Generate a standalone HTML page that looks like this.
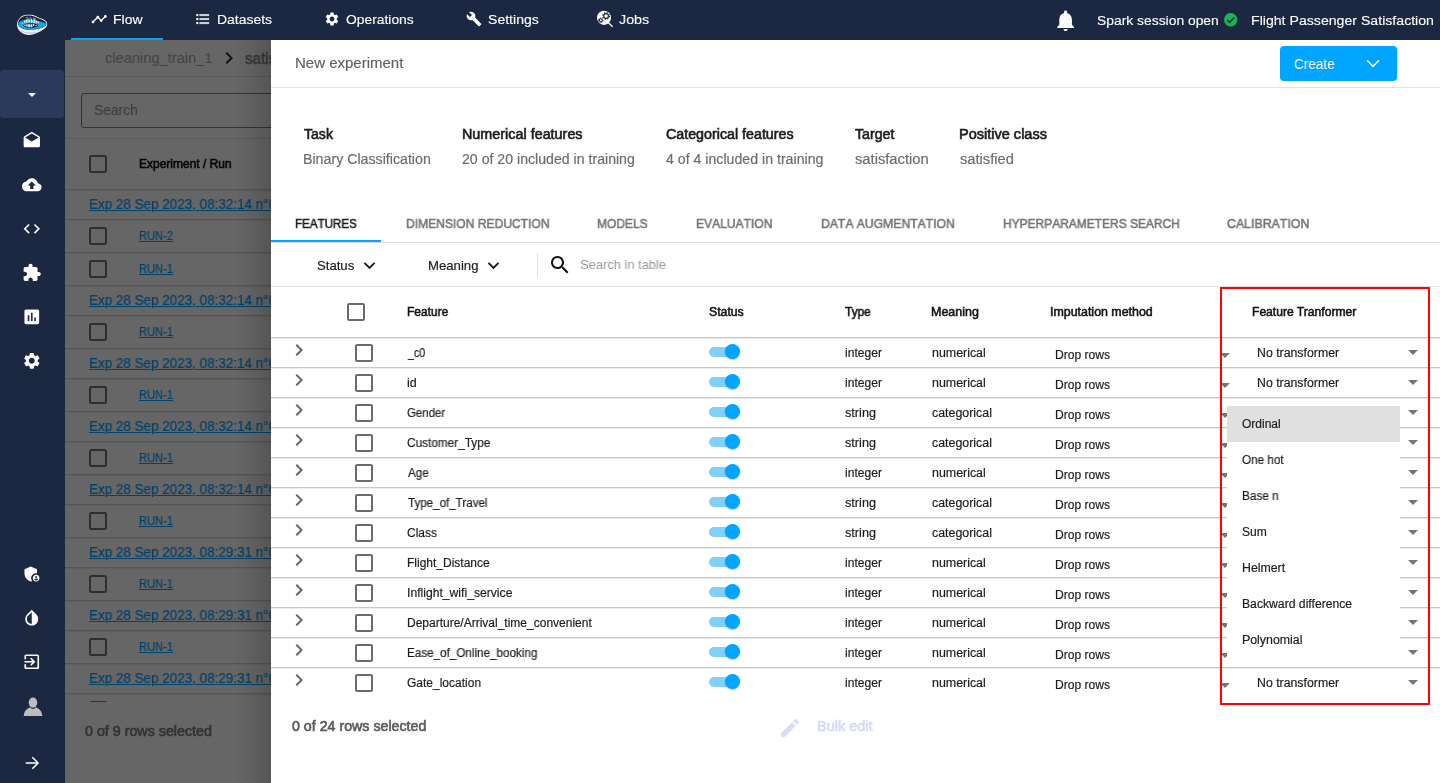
<!DOCTYPE html>
<html lang="en">
<head>
<meta charset="utf-8">
<title>New experiment</title>
<style>
html,body{margin:0;padding:0;}
body{width:1440px;height:783px;overflow:hidden;position:relative;background:#fff;font-family:"Liberation Sans",sans-serif;}
.a{position:absolute;}
.t{will-change:transform;position:absolute;white-space:nowrap;line-height:20px;height:20px;transform-origin:0 50%;font-family:"Liberation Sans",sans-serif;}
svg{position:absolute;overflow:visible;}
.cb{position:absolute;width:14px;height:14px;border:2px solid #6b6b6b;border-radius:2px;}
.cbd{position:absolute;width:14px;height:14px;border:2px solid #2e2e2e;border-radius:2.5px;}
.rl{position:absolute;left:271px;width:1169px;height:2px;background:linear-gradient(#c8c8c8 0,#c8c8c8 50%,#ececec 50%,#ececec 100%);}
.bl{position:absolute;left:65px;width:206px;height:2px;background:linear-gradient(#555 0,#555 50%,#5f5f5f 50%,#5f5f5f 100%);}
.trk{position:absolute;width:27px;height:10px;border-radius:5px;background:#7fd0fd;}
.thm{position:absolute;width:15.4px;height:15.4px;border-radius:50%;background:#00a5ff;box-shadow:0 1px 1.5px rgba(0,0,0,.25);}
</style>
</head>
<body>

<div class="a" id="bgpage" style="left:65px;top:40px;width:206px;height:743px;background:#666;"></div>
<div class="a" style="left:65px;top:76px;width:206px;height:1px;background:#5b5b5b;"></div>
<div class="a" style="left:65px;top:138px;width:206px;height:1px;background:#5b5b5b;"></div>
<div class="a" style="left:81px;top:93px;width:200px;height:33px;border:1px solid #333;border-radius:3px;"></div>
<svg style="left:217.4px;top:46.2px" width="24" height="24" viewBox="0 0 24 24"><path d="M10 6L8.59 7.41 13.17 12l-4.58 4.59L10 18l6-6z" fill="#111"/></svg>
<div class="cbd" style="left:89px;top:155px;"></div>
<div class="bl" style="top:189px;"></div>
<div class="bl" style="top:219px;"></div>
<div class="bl" style="top:252px;"></div>
<div class="bl" style="top:285px;"></div>
<div class="bl" style="top:315px;"></div>
<div class="bl" style="top:348px;"></div>
<div class="bl" style="top:378px;"></div>
<div class="bl" style="top:411px;"></div>
<div class="bl" style="top:441px;"></div>
<div class="bl" style="top:474px;"></div>
<div class="bl" style="top:504px;"></div>
<div class="bl" style="top:537px;"></div>
<div class="bl" style="top:567px;"></div>
<div class="bl" style="top:600px;"></div>
<div class="bl" style="top:630px;"></div>
<div class="bl" style="top:663px;"></div>
<div class="bl" style="top:693px;"></div>
<div class="cbd" style="left:89px;top:227px;"></div>
<div class="cbd" style="left:89px;top:260px;"></div>
<div class="cbd" style="left:89px;top:323px;"></div>
<div class="cbd" style="left:89px;top:386px;"></div>
<div class="cbd" style="left:89px;top:449px;"></div>
<div class="cbd" style="left:89px;top:512px;"></div>
<div class="cbd" style="left:89px;top:575px;"></div>
<div class="cbd" style="left:89px;top:638px;"></div>
<div class="a" style="left:89.5px;top:700.500px;width:17px;height:1.800px;border-radius:1px 1px 0 0;background:#343434;"></div>
<span class="t" style="left:104.89px;top:48.30px;font-size:15px;color:#424242;transform:scaleX(0.9766);">cleaning_train_1</span>
<span class="t" style="left:245.13px;top:48.80px;font-size:16px;color:#3b3b3b;-webkit-text-stroke:0.688px;transform:scaleX(0.9480);">satisfaction</span>
<span class="t" style="left:94.29px;top:100.00px;font-size:14.5px;color:#3a3a3a;transform:scaleX(0.9492);">Search</span>
<span class="t" style="left:139.40px;top:154.00px;font-size:12px;color:#000;-webkit-text-stroke:0.516px;transform:scaleX(0.9981);">Experiment / Run</span>
<span class="t" style="left:84.99px;top:721.00px;font-size:14px;color:#333;-webkit-text-stroke:0.602px;transform:scaleX(1.0193);">0 of 9 rows selected</span>
<span class="t bgl" style="left:88.84px;top:194.40px;font-size:14.5px;color:#00426a;transform:scaleX(0.9274);text-decoration:underline;text-decoration-thickness:1px;text-underline-offset:1px;-webkit-text-stroke:0.2px;">Exp 28 Sep 2023, 08:32:14 n°00</span>
<span class="t bgl" style="left:139.37px;top:225.50px;font-size:12px;color:#00426a;transform:scaleX(0.9281);text-decoration:underline;text-decoration-thickness:1px;text-underline-offset:1px;-webkit-text-stroke:0.2px;">RUN-2</span>
<span class="t bgl" style="left:139.37px;top:258.50px;font-size:12px;color:#00426a;transform:scaleX(0.9281);text-decoration:underline;text-decoration-thickness:1px;text-underline-offset:1px;-webkit-text-stroke:0.2px;">RUN-1</span>
<span class="t bgl" style="left:88.84px;top:290.40px;font-size:14.5px;color:#00426a;transform:scaleX(0.9274);text-decoration:underline;text-decoration-thickness:1px;text-underline-offset:1px;-webkit-text-stroke:0.2px;">Exp 28 Sep 2023, 08:32:14 n°00</span>
<span class="t bgl" style="left:139.37px;top:321.50px;font-size:12px;color:#00426a;transform:scaleX(0.9281);text-decoration:underline;text-decoration-thickness:1px;text-underline-offset:1px;-webkit-text-stroke:0.2px;">RUN-1</span>
<span class="t bgl" style="left:88.84px;top:353.40px;font-size:14.5px;color:#00426a;transform:scaleX(0.9274);text-decoration:underline;text-decoration-thickness:1px;text-underline-offset:1px;-webkit-text-stroke:0.2px;">Exp 28 Sep 2023, 08:32:14 n°00</span>
<span class="t bgl" style="left:139.37px;top:384.50px;font-size:12px;color:#00426a;transform:scaleX(0.9281);text-decoration:underline;text-decoration-thickness:1px;text-underline-offset:1px;-webkit-text-stroke:0.2px;">RUN-1</span>
<span class="t bgl" style="left:88.84px;top:416.40px;font-size:14.5px;color:#00426a;transform:scaleX(0.9274);text-decoration:underline;text-decoration-thickness:1px;text-underline-offset:1px;-webkit-text-stroke:0.2px;">Exp 28 Sep 2023, 08:32:14 n°00</span>
<span class="t bgl" style="left:139.37px;top:447.50px;font-size:12px;color:#00426a;transform:scaleX(0.9281);text-decoration:underline;text-decoration-thickness:1px;text-underline-offset:1px;-webkit-text-stroke:0.2px;">RUN-1</span>
<span class="t bgl" style="left:88.84px;top:479.40px;font-size:14.5px;color:#00426a;transform:scaleX(0.9274);text-decoration:underline;text-decoration-thickness:1px;text-underline-offset:1px;-webkit-text-stroke:0.2px;">Exp 28 Sep 2023, 08:32:14 n°00</span>
<span class="t bgl" style="left:139.37px;top:510.50px;font-size:12px;color:#00426a;transform:scaleX(0.9281);text-decoration:underline;text-decoration-thickness:1px;text-underline-offset:1px;-webkit-text-stroke:0.2px;">RUN-1</span>
<span class="t bgl" style="left:88.84px;top:542.40px;font-size:14.5px;color:#00426a;transform:scaleX(0.9274);text-decoration:underline;text-decoration-thickness:1px;text-underline-offset:1px;-webkit-text-stroke:0.2px;">Exp 28 Sep 2023, 08:29:31 n°00</span>
<span class="t bgl" style="left:139.37px;top:573.50px;font-size:12px;color:#00426a;transform:scaleX(0.9281);text-decoration:underline;text-decoration-thickness:1px;text-underline-offset:1px;-webkit-text-stroke:0.2px;">RUN-1</span>
<span class="t bgl" style="left:88.84px;top:605.40px;font-size:14.5px;color:#00426a;transform:scaleX(0.9274);text-decoration:underline;text-decoration-thickness:1px;text-underline-offset:1px;-webkit-text-stroke:0.2px;">Exp 28 Sep 2023, 08:29:31 n°00</span>
<span class="t bgl" style="left:139.37px;top:636.50px;font-size:12px;color:#00426a;transform:scaleX(0.9281);text-decoration:underline;text-decoration-thickness:1px;text-underline-offset:1px;-webkit-text-stroke:0.2px;">RUN-1</span>
<span class="t bgl" style="left:88.84px;top:668.40px;font-size:14.5px;color:#00426a;transform:scaleX(0.9274);text-decoration:underline;text-decoration-thickness:1px;text-underline-offset:1px;-webkit-text-stroke:0.2px;">Exp 28 Sep 2023, 08:29:31 n°00</span>
<div class="a" id="dialog" style="left:271px;top:40px;width:1169px;height:743px;background:#fff;"></div>
<div class="a" style="left:235px;top:40px;width:36px;height:743px;background:linear-gradient(to right,rgba(0,0,0,0),rgba(0,0,0,.05) 40%,rgba(0,0,0,.16));"></div>
<div class="a" style="left:271px;top:87px;width:1169px;height:1px;background:#e2e2e2;"></div>
<div class="a" style="left:1280px;top:46px;width:117px;height:35px;border-radius:4px;background:#00a5ff;"></div>
<svg style="left:1366px;top:59px" width="14" height="9" viewBox="0 0 14 9"><path d="M1.2 1.5 L7 7.3 L12.8 1.5" fill="none" stroke="#fff" stroke-width="1.7"/></svg>
<div class="a" style="left:271px;top:242px;width:1169px;height:1px;background:#dedede;"></div>
<div class="a" style="left:271px;top:240px;width:110px;height:2px;background:#00a5ff;"></div>
<svg style="left:357.65px;top:253.500px" width="23" height="23" viewBox="0 0 24 24"><path d="M7.410 8.590L12 13.170l4.590-4.580L18 10l-6 6-6-6 1.410-1.410z" fill="#1c1c1c"/></svg>
<svg style="left:482.15px;top:253.500px" width="23" height="23" viewBox="0 0 24 24"><path d="M7.410 8.590L12 13.170l4.590-4.580L18 10l-6 6-6-6 1.410-1.410z" fill="#1c1c1c"/></svg>
<div class="a" style="left:537px;top:253px;width:1px;height:24px;background:#e0e0e0;"></div>
<svg style="left:547.7px;top:252.9px" width="24" height="24" viewBox="0 0 24 24"><path d="M15.5 14h-.79l-.28-.27C15.41 12.59 16 11.11 16 9.5 16 5.91 13.09 3 9.5 3S3 5.91 3 9.5 5.91 16 9.5 16c1.61 0 3.09-.59 4.23-1.57l.27.28v.79l5 4.99L20.49 19l-4.99-5zm-6 0C7.01 14 5 11.99 5 9.5S7.01 5 9.5 5 14 7.01 14 9.5 11.99 14 9.5 14z" fill="#111"/></svg>
<div class="a" style="left:271px;top:286px;width:1169px;height:1px;background:#e2e2e2;"></div>
<div class="cb" style="left:347px;top:303px;"></div>
<div class="rl" style="top:337px;"></div>
<svg style="left:287.4px;top:338.2px" width="24" height="24" viewBox="0 0 24 24"><path d="M10 6L8.59 7.41 13.17 12l-4.58 4.59L10 18l6-6z" fill="#666"/></svg>
<div class="cb" style="left:355px;top:344px;"></div>
<div class="trk" style="left:709px;top:347px;"></div>
<div class="thm" style="left:724.8px;top:343.8px;"></div>
<svg style="left:1219.5px;top:353px" width="10" height="5" viewBox="0 0 10 5"><path d="M0 0h10L5 5z" fill="#757575"/></svg>
<svg style="left:1408.2px;top:350px" width="10" height="5" viewBox="0 0 10 5"><path d="M0 0h10L5 5z" fill="#757575"/></svg>
<div class="rl" style="top:367px;"></div>
<svg style="left:287.4px;top:368.2px" width="24" height="24" viewBox="0 0 24 24"><path d="M10 6L8.59 7.41 13.17 12l-4.58 4.59L10 18l6-6z" fill="#666"/></svg>
<div class="cb" style="left:355px;top:374px;"></div>
<div class="trk" style="left:709px;top:377px;"></div>
<div class="thm" style="left:724.8px;top:373.8px;"></div>
<svg style="left:1219.5px;top:383px" width="10" height="5" viewBox="0 0 10 5"><path d="M0 0h10L5 5z" fill="#757575"/></svg>
<svg style="left:1408.2px;top:380px" width="10" height="5" viewBox="0 0 10 5"><path d="M0 0h10L5 5z" fill="#757575"/></svg>
<div class="rl" style="top:397px;"></div>
<svg style="left:287.4px;top:398.2px" width="24" height="24" viewBox="0 0 24 24"><path d="M10 6L8.59 7.41 13.17 12l-4.58 4.59L10 18l6-6z" fill="#666"/></svg>
<div class="cb" style="left:355px;top:404px;"></div>
<div class="trk" style="left:709px;top:407px;"></div>
<div class="thm" style="left:724.8px;top:403.8px;"></div>
<svg style="left:1219.5px;top:413px" width="10" height="5" viewBox="0 0 10 5"><path d="M0 0h10L5 5z" fill="#757575"/></svg>
<svg style="left:1408.2px;top:410px" width="10" height="5" viewBox="0 0 10 5"><path d="M0 0h10L5 5z" fill="#757575"/></svg>
<div class="rl" style="top:427px;"></div>
<svg style="left:287.4px;top:428.2px" width="24" height="24" viewBox="0 0 24 24"><path d="M10 6L8.59 7.41 13.17 12l-4.58 4.59L10 18l6-6z" fill="#666"/></svg>
<div class="cb" style="left:355px;top:434px;"></div>
<div class="trk" style="left:709px;top:437px;"></div>
<div class="thm" style="left:724.8px;top:433.8px;"></div>
<svg style="left:1219.5px;top:443px" width="10" height="5" viewBox="0 0 10 5"><path d="M0 0h10L5 5z" fill="#757575"/></svg>
<svg style="left:1408.2px;top:440px" width="10" height="5" viewBox="0 0 10 5"><path d="M0 0h10L5 5z" fill="#757575"/></svg>
<div class="rl" style="top:457px;"></div>
<svg style="left:287.4px;top:458.2px" width="24" height="24" viewBox="0 0 24 24"><path d="M10 6L8.59 7.41 13.17 12l-4.58 4.59L10 18l6-6z" fill="#666"/></svg>
<div class="cb" style="left:355px;top:464px;"></div>
<div class="trk" style="left:709px;top:467px;"></div>
<div class="thm" style="left:724.8px;top:463.8px;"></div>
<svg style="left:1219.5px;top:473px" width="10" height="5" viewBox="0 0 10 5"><path d="M0 0h10L5 5z" fill="#757575"/></svg>
<svg style="left:1408.2px;top:470px" width="10" height="5" viewBox="0 0 10 5"><path d="M0 0h10L5 5z" fill="#757575"/></svg>
<div class="rl" style="top:487px;"></div>
<svg style="left:287.4px;top:488.2px" width="24" height="24" viewBox="0 0 24 24"><path d="M10 6L8.59 7.41 13.17 12l-4.58 4.59L10 18l6-6z" fill="#666"/></svg>
<div class="cb" style="left:355px;top:494px;"></div>
<div class="trk" style="left:709px;top:497px;"></div>
<div class="thm" style="left:724.8px;top:493.8px;"></div>
<svg style="left:1219.5px;top:503px" width="10" height="5" viewBox="0 0 10 5"><path d="M0 0h10L5 5z" fill="#757575"/></svg>
<svg style="left:1408.2px;top:500px" width="10" height="5" viewBox="0 0 10 5"><path d="M0 0h10L5 5z" fill="#757575"/></svg>
<div class="rl" style="top:517px;"></div>
<svg style="left:287.4px;top:518.2px" width="24" height="24" viewBox="0 0 24 24"><path d="M10 6L8.59 7.41 13.17 12l-4.58 4.59L10 18l6-6z" fill="#666"/></svg>
<div class="cb" style="left:355px;top:524px;"></div>
<div class="trk" style="left:709px;top:527px;"></div>
<div class="thm" style="left:724.8px;top:523.8px;"></div>
<svg style="left:1219.5px;top:533px" width="10" height="5" viewBox="0 0 10 5"><path d="M0 0h10L5 5z" fill="#757575"/></svg>
<svg style="left:1408.2px;top:530px" width="10" height="5" viewBox="0 0 10 5"><path d="M0 0h10L5 5z" fill="#757575"/></svg>
<div class="rl" style="top:547px;"></div>
<svg style="left:287.4px;top:548.2px" width="24" height="24" viewBox="0 0 24 24"><path d="M10 6L8.59 7.41 13.17 12l-4.58 4.59L10 18l6-6z" fill="#666"/></svg>
<div class="cb" style="left:355px;top:554px;"></div>
<div class="trk" style="left:709px;top:557px;"></div>
<div class="thm" style="left:724.8px;top:553.8px;"></div>
<svg style="left:1219.5px;top:563px" width="10" height="5" viewBox="0 0 10 5"><path d="M0 0h10L5 5z" fill="#757575"/></svg>
<svg style="left:1408.2px;top:560px" width="10" height="5" viewBox="0 0 10 5"><path d="M0 0h10L5 5z" fill="#757575"/></svg>
<div class="rl" style="top:577px;"></div>
<svg style="left:287.4px;top:578.2px" width="24" height="24" viewBox="0 0 24 24"><path d="M10 6L8.59 7.41 13.17 12l-4.58 4.59L10 18l6-6z" fill="#666"/></svg>
<div class="cb" style="left:355px;top:584px;"></div>
<div class="trk" style="left:709px;top:587px;"></div>
<div class="thm" style="left:724.8px;top:583.8px;"></div>
<svg style="left:1219.5px;top:593px" width="10" height="5" viewBox="0 0 10 5"><path d="M0 0h10L5 5z" fill="#757575"/></svg>
<svg style="left:1408.2px;top:590px" width="10" height="5" viewBox="0 0 10 5"><path d="M0 0h10L5 5z" fill="#757575"/></svg>
<div class="rl" style="top:607px;"></div>
<svg style="left:287.4px;top:608.2px" width="24" height="24" viewBox="0 0 24 24"><path d="M10 6L8.59 7.41 13.17 12l-4.58 4.59L10 18l6-6z" fill="#666"/></svg>
<div class="cb" style="left:355px;top:614px;"></div>
<div class="trk" style="left:709px;top:617px;"></div>
<div class="thm" style="left:724.8px;top:613.8px;"></div>
<svg style="left:1219.5px;top:623px" width="10" height="5" viewBox="0 0 10 5"><path d="M0 0h10L5 5z" fill="#757575"/></svg>
<svg style="left:1408.2px;top:620px" width="10" height="5" viewBox="0 0 10 5"><path d="M0 0h10L5 5z" fill="#757575"/></svg>
<div class="rl" style="top:637px;"></div>
<svg style="left:287.4px;top:638.2px" width="24" height="24" viewBox="0 0 24 24"><path d="M10 6L8.59 7.41 13.17 12l-4.58 4.59L10 18l6-6z" fill="#666"/></svg>
<div class="cb" style="left:355px;top:644px;"></div>
<div class="trk" style="left:709px;top:647px;"></div>
<div class="thm" style="left:724.8px;top:643.8px;"></div>
<svg style="left:1219.5px;top:653px" width="10" height="5" viewBox="0 0 10 5"><path d="M0 0h10L5 5z" fill="#757575"/></svg>
<svg style="left:1408.2px;top:650px" width="10" height="5" viewBox="0 0 10 5"><path d="M0 0h10L5 5z" fill="#757575"/></svg>
<div class="rl" style="top:667px;"></div>
<svg style="left:287.4px;top:668.2px" width="24" height="24" viewBox="0 0 24 24"><path d="M10 6L8.59 7.41 13.17 12l-4.58 4.59L10 18l6-6z" fill="#666"/></svg>
<div class="cb" style="left:355px;top:674px;"></div>
<div class="trk" style="left:709px;top:677px;"></div>
<div class="thm" style="left:724.8px;top:673.8px;"></div>
<svg style="left:1219.5px;top:683px" width="10" height="5" viewBox="0 0 10 5"><path d="M0 0h10L5 5z" fill="#757575"/></svg>
<svg style="left:1408.2px;top:680px" width="10" height="5" viewBox="0 0 10 5"><path d="M0 0h10L5 5z" fill="#757575"/></svg>
<div class="a" style="left:1227px;top:406px;width:173px;height:255px;background:#fff;"></div>
<div class="a" style="left:1227px;top:406px;width:173px;height:36px;background:#e0e0e0;"></div>
<div class="a" style="left:1220px;top:287px;width:206px;height:414px;border:2px solid #ff0000;"></div>
<svg style="left:778px;top:715.5px" width="24" height="24" viewBox="0 0 24 24"><path d="M3 17.25V21h3.75L17.81 9.94l-3.75-3.75L3 17.25zM20.71 7.04c.39-.39.39-1.02 0-1.41l-2.34-2.34c-.39-.39-1.02-.39-1.41 0l-1.83 1.83 3.75 3.75 1.83-1.83z" fill="#d9ddf6"/></svg>
<div class="a" id="topbar" style="left:0;top:0;width:1440px;height:40px;background:#1c2841;"></div>
<div class="a" style="left:71px;top:38px;width:92px;height:2px;background:#00a5ff;"></div>
<svg style="left:90.9px;top:10.6px" width="16.4" height="16.4" viewBox="0 0 24 24"><path d="M23 8c0 1.100-.9 2-2 2-.18 0-.35-.02-.51-.07l-3.560 3.550c.05.16.07.34.07.52 0 1.100-.9 2-2 2s-2-.9-2-2c0-.18.020-.36.070-.52l-2.550-2.550c-.16.05-.34.07-.52.07s-.36-.02-.52-.07l-4.550 4.560c.05.16.07.33.07.51 0 1.100-.9 2-2 2s-2-.9-2-2 .9-2 2-2c.18 0 .35.020.51.070l4.560-4.550C8.020 9.360 8 9.180 8 9c0-1.100.9-2 2-2s2 .9 2 2c0 .18-.02.36-.07.52l2.550 2.550c.16-.05.34-.07.52-.07s.36.020.52.070l3.550-3.560C19.020 8.350 19 8.180 19 8c0-1.100.9-2 2-2s2 .9 2 2z" fill="#fff"/></svg>
<svg style="left:196px;top:14px" width="14" height="11" viewBox="0 0 14 11"><g fill="#fff"><rect x="0.300" y="0" width="2" height="2.100"/><rect x="0.300" y="4" width="2" height="2.100"/><rect x="0.300" y="8" width="2" height="2.100"/></g><g fill="#c9cdd7"><rect x="3.400" y="0" width="9.700" height="2.100"/><rect x="3.400" y="4" width="9.700" height="2.100"/><rect x="3.400" y="8" width="9.700" height="2.100"/></g></svg>
<svg style="left:324.1px;top:11.4px" width="16" height="16" viewBox="0 0 24 24"><path d="M19.14 12.94c.04-.3.06-.61.06-.94 0-.32-.02-.64-.07-.94l2.03-1.58a.49.49 0 0 0 .12-.61l-1.92-3.32a.488.488 0 0 0-.59-.22l-2.39.96c-.5-.38-1.03-.7-1.62-.94l-.36-2.54a.484.484 0 0 0-.48-.41h-3.84c-.24 0-.43.17-.47.41l-.36 2.54c-.59.24-1.13.57-1.62.94l-2.39-.96c-.22-.08-.47 0-.59.22L2.74 8.87c-.12.21-.08.47.12.61l2.03 1.58c-.05.3-.09.63-.09.94s.02.64.07.94l-2.03 1.58a.49.49 0 0 0-.12.61l1.92 3.32c.12.22.37.29.59.22l2.39-.96c.5.38 1.03.7 1.62.94l.36 2.54c.05.24.24.41.48.41h3.84c.24 0 .44-.17.47-.41l.36-2.54c.59-.24 1.13-.56 1.62-.94l2.39.96c.22.08.47 0 .59-.22l1.92-3.32c.12-.22.07-.47-.12-.61l-2.01-1.58zM12 15.6c-1.98 0-3.600-1.62-3.600-3.600s1.620-3.600 3.600-3.600 3.600 1.620 3.600 3.600-1.620 3.600-3.600 3.600z" fill="#fff"/></svg>
<svg style="left:465.9px;top:10.9px" width="16" height="16" viewBox="0 0 24 24"><path d="M22.7 19l-9.1-9.1c.9-2.3.4-5-1.500-6.900-2-2-5-2.400-7.400-1.300L9 6 6 9 1.600 4.700C.4 7.100.9 10.100 2.900 12.100c1.900 1.900 4.600 2.400 6.900 1.500l9.100 9.100c.4.400 1 .400 1.400 0l2.300-2.300c.5-.4.500-1.100.1-1.400z" fill="#fff"/></svg>
<svg style="left:596px;top:10px" width="18" height="18" viewBox="0 0 18 18"><circle cx="8" cy="7.800" r="7.100" fill="#fff"/><path d="M12.500 12.800 L16.300 16.500" stroke="#fff" stroke-width="1.250" stroke-linecap="round"/><circle cx="10.100" cy="6" r="2.950" fill="#1c2841"/><circle cx="10.100" cy="6" r="3.300" fill="none" stroke="#1c2841" stroke-width="1.200" stroke-dasharray="1.300 1.290"/><circle cx="10.100" cy="6" r="1.750" fill="#fff"/><circle cx="4.800" cy="10.300" r="2.100" fill="#1c2841"/><circle cx="4.800" cy="10.300" r="2.350" fill="none" stroke="#1c2841" stroke-width="0.900" stroke-dasharray="0.920 0.925"/><circle cx="4.800" cy="10.300" r="1" fill="#fff"/></svg>
<svg style="left:1052.6px;top:8.3px" width="25.2" height="25.2" viewBox="0 0 24 24"><path d="M12 22c1.100 0 2-.9 2-2h-4c0 1.100.89 2 2 2zm6-6v-5c0-3.070-1.640-5.640-4.500-6.320V4c0-.83-.67-1.500-1.500-1.500s-1.500.67-1.500 1.500v.68C7.630 5.360 6 7.920 6 11v5l-2 2v1h16v-1l-2-2z" fill="#fff"/></svg>
<svg style="left:1224px;top:13.200px" width="13.400" height="13.400" viewBox="0 0 24 24"><circle cx="12" cy="12" r="12" fill="#12b950"/><path d="M5.600 12.600l4.300 4.300 8.500-8.700" fill="none" stroke="#1c2841" stroke-width="2.900"/></svg>
<div class="a" id="sidebar" style="left:0;top:0;width:65px;height:783px;background:#1c2841;"></div>
<div class="a" style="left:0;top:70px;width:64px;height:48px;border-radius:4px;background:#2b3a5b;"></div>
<svg style="left:28px;top:93px" width="8" height="4" viewBox="0 0 8 4"><path d="M0 0h8L4 4z" fill="#fff"/></svg>
<svg style="left:10px;top:8px" width="45" height="34" viewBox="10 8 45 34"><path d="M17,24.500C17,20.300 20.500,15 27,14.750C31,14.600 34,14.900 36.600,16.400C40,18.400 47.250,19.400 47.250,24C47.250,28 42,30.500 38,32.600C35,34.200 32,35.050 29,35.050C23,35.050 17,30.600 17,24.500Z" fill="#f2f2f9"/><path d="M19.300,29.600C23,34.200 33,35.700 41.500,30.300C35,33.300 25.500,33.400 19.300,29.600Z" fill="#c3c6de"/><path d="M17.800,24C18,20.600 21,15.700 27,15.500C31,15.350 33.600,15.750 36.100,17.150C39.600,19.150 46.450,20.100 46.450,24C46.450,24.600 46.300,25.100 46,25.600C42,28.500 36,29.800 30,29.800C24,29.800 18.500,27.500 17.800,24Z" fill="#1c2841"/><path d="M17.900,23.500C19,21.600 22.500,20 27,19.700C32,19.400 40,20.800 46.200,23.600C46.300,24.400 46.200,25.100 45.900,25.600C42,28.400 36,29.700 30,29.700C24,29.700 18.600,27.500 17.900,23.500Z" fill="#11a5e6"/><ellipse cx="30.600" cy="25.400" rx="7.600" ry="2.100" fill="#101a30"/><g fill="#fff"><rect x="24.200" y="20.200" width="1" height="2.600"/><rect x="25.800" y="19.300" width="1" height="3.400"/><rect x="27.500" y="18.300" width="1" height="4.300"/><rect x="29.200" y="19.200" width="1" height="3.300"/><rect x="30.900" y="18.700" width="1" height="3.900"/><rect x="32.600" y="19.400" width="1" height="3.500"/><rect x="34.300" y="18.300" width="1.100" height="4.800"/><rect x="36.200" y="20.500" width="1" height="2.600"/><rect x="37.900" y="21.500" width="0.900" height="1.800"/><rect x="21.900" y="22.800" width="1" height="0.900"/><rect x="26.400" y="17.100" width="0.900" height="0.900"/><rect x="29.600" y="17.500" width="0.900" height="0.900"/><rect x="33" y="17.700" width="0.800" height="0.800"/><rect x="24.400" y="24.600" width="1.300" height="1.500"/><rect x="26.300" y="24.200" width="1.300" height="2.400"/><rect x="28.200" y="24.200" width="1.700" height="2.800"/><rect x="30.500" y="24.400" width="1.900" height="2.500"/><rect x="33" y="24.200" width="1.300" height="1.800"/><rect x="35.600" y="24.900" width="1.200" height="1.200"/></g></svg>
<svg style="left:22.2px;top:131.4px" width="19.6" height="19.6" viewBox="0 0 24 24"><path d="M21.990 8c0-.72-.37-1.350-.94-1.700L12 1 2.950 6.300C2.380 6.650 2 7.280 2 8v10c0 1.100.9 2 2 2h16c1.100 0 2-.9 2-2l-.01-10zM12 13L3.740 7.840 12 3l8.260 4.840L12 13z" fill="#fff"/></svg>
<svg style="left:22.2px;top:175.2px" width="19.6" height="19.6" viewBox="0 0 24 24"><path d="M19.350 10.040C18.670 6.590 15.640 4 12 4 9.110 4 6.600 5.640 5.350 8.040 2.340 8.360 0 10.910 0 14c0 3.310 2.690 6 6 6h13c2.760 0 5-2.240 5-5 0-2.640-2.050-4.780-4.650-4.960zM14 13v4h-4v-4H7l5-5 5 5h-3z" fill="#fff"/></svg>
<svg style="left:22.2px;top:218.7px" width="19.6" height="19.6" viewBox="0 0 24 24"><path d="M9.400 16.600L4.800 12l4.600-4.600L8 6l-6 6 6 6 1.400-1.400zm5.200 0l4.600-4.600-4.600-4.600L16 6l6 6-6 6-1.400-1.400z" fill="#fff"/></svg>
<svg style="left:22.2px;top:262.8px" width="19.6" height="19.6" viewBox="0 0 24 24"><path d="M20.500 11H19V7c0-1.100-.9-2-2-2h-4V3.500C13 2.120 11.880 1 10.500 1S8 2.120 8 3.500V5H4c-1.100 0-1.990.9-1.990 2v3.800H3.500c1.490 0 2.700 1.210 2.700 2.700s-1.210 2.700-2.700 2.700H2V20c0 1.100.9 2 2 2h3.800v-1.500c0-1.490 1.210-2.700 2.700-2.700 1.490 0 2.700 1.210 2.700 2.700V22H17c1.100 0 2-.9 2-2v-4h1.500c1.380 0 2.500-1.120 2.500-2.500S21.880 11 20.500 11z" fill="#fff"/></svg>
<svg style="left:22.2px;top:306.9px" width="19.6" height="19.6" viewBox="0 0 24 24"><path d="M19 3H5c-1.100 0-2 .9-2 2v14c0 1.100.9 2 2 2h14c1.100 0 2-.9 2-2V5c0-1.100-.9-2-2-2zM9 17H7v-7h2v7zm4 0h-2V7h2v10zm4 0h-2v-4h2v4z" fill="#fff"/></svg>
<svg style="left:22.2px;top:351px" width="19.6" height="19.6" viewBox="0 0 24 24"><path d="M19.140 12.940c.04-.3.060-.61.060-.94 0-.32-.02-.64-.07-.94l2.030-1.580a.49.49 0 0 0 .12-.61l-1.920-3.320a.488.488 0 0 0-.59-.22l-2.390.96c-.5-.38-1.030-.7-1.620-.94l-.36-2.540a.484.484 0 0 0-.48-.41h-3.840c-.24 0-.43.170-.47.410l-.36 2.540c-.59.240-1.130.57-1.620.94l-2.390-.96c-.22-.08-.47 0-.59.220L2.740 8.870c-.12.210-.08.470.12.610l2.030 1.580c-.05.300-.09.630-.09.940s.02.640.07.940l-2.030 1.580a.49.49 0 0 0-.12.610l1.920 3.320c.12.220.37.290.59.220l2.390-.96c.5.380 1.030.7 1.620.94l.36 2.540c.05.240.24.410.48.410h3.840c.24 0 .44-.17.470-.41l.36-2.540c.59-.24 1.130-.56 1.620-.94l2.390.96c.22.080.47 0 .59-.22l1.920-3.320c.12-.22.070-.47-.12-.61l-2.010-1.580zM12 15.600c-1.980 0-3.600-1.620-3.600-3.600s1.620-3.600 3.600-3.600 3.600 1.620 3.600 3.600-1.620 3.600-3.600 3.600z" fill="#fff"/></svg>
<svg style="left:22px;top:563.500px" width="20" height="20" viewBox="0 0 24 24"><path d="M17 11c.34 0 .67.040 1 .09V6.270L10.500 3 3 6.270v4.910c0 4.540 3.200 8.790 7.500 9.820.55-.13 1.080-.32 1.600-.55-.69-.98-1.100-2.170-1.100-3.450 0-3.310 2.690-6 6-6z" fill="#fff"/><path d="M17 13c-2.210 0-4 1.790-4 4s1.790 4 4 4 4-1.790 4-4-1.790-4-4-4zm0 1.380c.62 0 1.120.51 1.120 1.120s-.51 1.120-1.120 1.120-1.120-.51-1.120-1.120.5-1.120 1.120-1.120zm0 5.370c-.93 0-1.740-.46-2.240-1.170.05-.72 1.510-1.080 2.240-1.080s2.190.36 2.240 1.080c-.5.710-1.310 1.170-2.240 1.170z" fill="#fff"/></svg>
<svg style="left:22.25px;top:607.85px" width="19.5" height="19.5" viewBox="0 0 24 24"><path d="M17.660 7.930L12 2.270 6.340 7.930c-3.120 3.120-3.120 8.190 0 11.310C7.900 20.800 9.950 21.580 12 21.580c2.050 0 4.100-.78 5.660-2.340 3.120-3.120 3.120-8.190 0-11.310zM12 19.590c-1.600 0-3.110-.62-4.240-1.760C6.620 16.690 6 15.190 6 13.590s.62-3.110 1.760-4.240L12 5.100v14.490z" fill="#fff"/></svg>
<svg style="left:22.25px;top:651.95px" width="19.5" height="19.5" viewBox="0 0 24 24"><path d="M10.090 15.590L11.500 17l5-5-5-5-1.410 1.410L12.670 11H3v2h9.670l-2.580 2.590zM19 3H5c-1.110 0-2 .9-2 2v4h2V5h14v14H5v-4H3v4c0 1.100.89 2 2 2h14c1.100 0 2-.9 2-2V5c0-1.100-.9-2-2-2z" fill="#fff"/></svg>
<svg style="left:23px;top:697px" width="20" height="20" viewBox="0 0 20 20"><ellipse cx="10" cy="5.600" rx="4.300" ry="5.100" fill="#bdbdbd"/><path d="M0.700 19c.3-3.500 1.600-6.300 4.200-7.600l2.300-1.100c.8 1.100 1.700 1.600 2.800 1.600s2-.5 2.800-1.600l2.300 1.100c2.600 1.300 3.900 4.100 4.200 7.600z" fill="#bdbdbd"/></svg>
<svg style="left:24px;top:755.300px" width="16" height="16" viewBox="0 0 16 16"><path d="M1.700 8h12M8.300 2.200l5.800 5.800-5.800 5.800" fill="none" stroke="#fff" stroke-width="1.500"/></svg>
<span class="t" style="left:113.15px;top:10.00px;font-size:13.7px;color:#fff;-webkit-text-stroke:0.12px;transform:scaleX(1.0198);">Flow</span>
<span class="t" style="left:217.05px;top:10.00px;font-size:13.7px;color:#fff;-webkit-text-stroke:0.12px;transform:scaleX(1.0196);">Datasets</span>
<span class="t" style="left:345.87px;top:10.00px;font-size:13.7px;color:#fff;-webkit-text-stroke:0.12px;transform:scaleX(1.0110);">Operations</span>
<span class="t" style="left:487.86px;top:10.00px;font-size:13.7px;color:#fff;-webkit-text-stroke:0.12px;transform:scaleX(1.0274);">Settings</span>
<span class="t" style="left:619.34px;top:10.00px;font-size:13.7px;color:#fff;-webkit-text-stroke:0.12px;transform:scaleX(1.0453);">Jobs</span>
<span class="t" style="left:1097.07px;top:11.00px;font-size:13.7px;color:#fff;-webkit-text-stroke:0.12px;transform:scaleX(1.0131);">Spark session open</span>
<span class="t" style="left:1250.64px;top:11.00px;font-size:13.7px;color:#fff;-webkit-text-stroke:0.12px;transform:scaleX(1.0322);">Flight Passenger Satisfaction</span>
<span class="t" style="left:295.05px;top:53.00px;font-size:15px;color:#606060;-webkit-text-stroke:0.15px;">New experiment</span>
<span class="t" style="left:1294.27px;top:54.00px;font-size:14px;color:#fff;transform:scaleX(0.9698);">Create</span>
<span class="t" style="left:303.62px;top:124.40px;font-size:14px;color:#1c1c1c;-webkit-text-stroke:0.602px;transform:scaleX(1.0044);">Task</span>
<span class="t" style="left:302.86px;top:149.40px;font-size:14px;color:#6c6c6c;-webkit-text-stroke:0.18px;transform:scaleX(1.0137);">Binary Classification</span>
<span class="t" style="left:461.65px;top:124.40px;font-size:14px;color:#1c1c1c;-webkit-text-stroke:0.602px;transform:scaleX(1.0261);">Numerical features</span>
<span class="t" style="left:462.04px;top:149.40px;font-size:14px;color:#6c6c6c;-webkit-text-stroke:0.18px;transform:scaleX(1.0094);">20 of 20 included in training</span>
<span class="t" style="left:665.94px;top:124.40px;font-size:14px;color:#1c1c1c;-webkit-text-stroke:0.602px;transform:scaleX(1.0185);">Categorical features</span>
<span class="t" style="left:666.32px;top:149.40px;font-size:14px;color:#6c6c6c;-webkit-text-stroke:0.18px;transform:scaleX(1.0112);">4 of 4 included in training</span>
<span class="t" style="left:855.12px;top:124.40px;font-size:14px;color:#1c1c1c;-webkit-text-stroke:0.602px;transform:scaleX(1.0104);">Target</span>
<span class="t" style="left:855.11px;top:149.40px;font-size:14px;color:#6c6c6c;-webkit-text-stroke:0.18px;transform:scaleX(1.0516);">satisfaction</span>
<span class="t" style="left:959.33px;top:124.40px;font-size:14px;color:#1c1c1c;-webkit-text-stroke:0.602px;transform:scaleX(1.0370);">Positive class</span>
<span class="t" style="left:960.11px;top:149.40px;font-size:14px;color:#6c6c6c;-webkit-text-stroke:0.18px;transform:scaleX(1.0474);">satisfied</span>
<span class="t" style="left:295.19px;top:214.30px;font-size:12.7px;color:#1c1c1c;-webkit-text-stroke:0.5461px;transform:scaleX(0.9134);font-kerning:none;">FEATURES</span>
<span class="t" style="left:405.65px;top:214.30px;font-size:12.7px;color:#747474;-webkit-text-stroke:0.5461px;transform:scaleX(0.9518);font-kerning:none;">DIMENSION REDUCTION</span>
<span class="t" style="left:596.85px;top:214.30px;font-size:12.7px;color:#747474;-webkit-text-stroke:0.5461px;transform:scaleX(0.9462);font-kerning:none;">MODELS</span>
<span class="t" style="left:696.05px;top:214.30px;font-size:12.7px;color:#747474;-webkit-text-stroke:0.5461px;transform:scaleX(0.9506);font-kerning:none;">EVALUATION</span>
<span class="t" style="left:820.64px;top:214.30px;font-size:12.7px;color:#747474;-webkit-text-stroke:0.5461px;transform:scaleX(0.9585);font-kerning:none;">DATA AUGMENTATION</span>
<span class="t" style="left:1002.56px;top:214.30px;font-size:12.7px;color:#747474;-webkit-text-stroke:0.5461px;transform:scaleX(0.9429);font-kerning:none;">HYPERPARAMETERS SEARCH</span>
<span class="t" style="left:1226.89px;top:214.30px;font-size:12.7px;color:#747474;-webkit-text-stroke:0.5461px;transform:scaleX(0.9735);font-kerning:none;">CALIBRATION</span>
<span class="t" style="left:316.57px;top:256.00px;font-size:13px;color:#1c1c1c;-webkit-text-stroke:0.18px;transform:scaleX(1.0098);">Status</span>
<span class="t" style="left:428.16px;top:256.00px;font-size:13px;color:#1c1c1c;-webkit-text-stroke:0.18px;transform:scaleX(1.0131);">Meaning</span>
<span class="t" style="left:580.38px;top:254.60px;font-size:13px;color:#999;transform:scaleX(0.9918);">Search in table</span>
<span class="t" style="left:407.00px;top:302.00px;font-size:12px;color:#111;-webkit-text-stroke:0.516px;transform:scaleX(0.9956);">Feature</span>
<span class="t" style="left:708.96px;top:302.00px;font-size:12px;color:#111;-webkit-text-stroke:0.516px;transform:scaleX(1.0212);">Status</span>
<span class="t" style="left:844.85px;top:302.00px;font-size:12px;color:#111;-webkit-text-stroke:0.516px;transform:scaleX(0.9861);">Type</span>
<span class="t" style="left:931.16px;top:302.00px;font-size:12px;color:#111;-webkit-text-stroke:0.516px;transform:scaleX(1.0395);">Meaning</span>
<span class="t" style="left:1049.54px;top:302.00px;font-size:12px;color:#111;-webkit-text-stroke:0.516px;transform:scaleX(1.0338);">Imputation method</span>
<span class="t" style="left:1251.79px;top:302.00px;font-size:12px;color:#111;-webkit-text-stroke:0.516px;transform:scaleX(1.0086);">Feature Tranformer</span>
<span class="t" style="left:407.91px;top:342.70px;font-size:12px;color:#1c1c1c;-webkit-text-stroke:0.18px;transform:scaleX(0.8842);">_c0</span>
<span class="t" style="left:845.14px;top:342.70px;font-size:12px;color:#1c1c1c;-webkit-text-stroke:0.18px;transform:scaleX(1.0070);">integer</span>
<span class="t" style="left:932.22px;top:342.70px;font-size:12px;color:#1c1c1c;-webkit-text-stroke:0.18px;transform:scaleX(1.0337);">numerical</span>
<span class="t" style="left:1054.59px;top:344.90px;font-size:12px;color:#1c1c1c;-webkit-text-stroke:0.18px;transform:scaleX(1.0066);">Drop rows</span>
<span class="t" style="left:1256.77px;top:342.70px;font-size:12px;color:#1c1c1c;-webkit-text-stroke:0.18px;transform:scaleX(1.0257);">No transformer</span>
<span class="t" style="left:407.02px;top:372.70px;font-size:12px;color:#1c1c1c;-webkit-text-stroke:0.18px;transform:scaleX(1.0452);">id</span>
<span class="t" style="left:845.14px;top:372.70px;font-size:12px;color:#1c1c1c;-webkit-text-stroke:0.18px;transform:scaleX(1.0070);">integer</span>
<span class="t" style="left:932.22px;top:372.70px;font-size:12px;color:#1c1c1c;-webkit-text-stroke:0.18px;transform:scaleX(1.0337);">numerical</span>
<span class="t" style="left:1054.59px;top:374.90px;font-size:12px;color:#1c1c1c;-webkit-text-stroke:0.18px;transform:scaleX(1.0066);">Drop rows</span>
<span class="t" style="left:1256.77px;top:372.70px;font-size:12px;color:#1c1c1c;-webkit-text-stroke:0.18px;transform:scaleX(1.0257);">No transformer</span>
<span class="t" style="left:407.20px;top:402.70px;font-size:12px;color:#1c1c1c;-webkit-text-stroke:0.18px;transform:scaleX(0.9554);">Gender</span>
<span class="t" style="left:844.70px;top:402.70px;font-size:12px;color:#1c1c1c;-webkit-text-stroke:0.18px;transform:scaleX(1.0560);">string</span>
<span class="t" style="left:931.68px;top:402.70px;font-size:12px;color:#1c1c1c;-webkit-text-stroke:0.18px;transform:scaleX(1.0326);">categorical</span>
<span class="t" style="left:1054.59px;top:404.90px;font-size:12px;color:#1c1c1c;-webkit-text-stroke:0.18px;transform:scaleX(1.0066);">Drop rows</span>
<span class="t" style="left:407.18px;top:432.70px;font-size:12px;color:#1c1c1c;-webkit-text-stroke:0.18px;transform:scaleX(0.9844);">Customer_Type</span>
<span class="t" style="left:844.70px;top:432.70px;font-size:12px;color:#1c1c1c;-webkit-text-stroke:0.18px;transform:scaleX(1.0560);">string</span>
<span class="t" style="left:931.68px;top:432.70px;font-size:12px;color:#1c1c1c;-webkit-text-stroke:0.18px;transform:scaleX(1.0326);">categorical</span>
<span class="t" style="left:1054.59px;top:434.90px;font-size:12px;color:#1c1c1c;-webkit-text-stroke:0.18px;transform:scaleX(1.0066);">Drop rows</span>
<span class="t" style="left:407.80px;top:462.70px;font-size:12px;color:#1c1c1c;-webkit-text-stroke:0.18px;transform:scaleX(0.9677);">Age</span>
<span class="t" style="left:845.14px;top:462.70px;font-size:12px;color:#1c1c1c;-webkit-text-stroke:0.18px;transform:scaleX(1.0070);">integer</span>
<span class="t" style="left:932.22px;top:462.70px;font-size:12px;color:#1c1c1c;-webkit-text-stroke:0.18px;transform:scaleX(1.0337);">numerical</span>
<span class="t" style="left:1054.59px;top:464.90px;font-size:12px;color:#1c1c1c;-webkit-text-stroke:0.18px;transform:scaleX(1.0066);">Drop rows</span>
<span class="t" style="left:407.56px;top:492.70px;font-size:12px;color:#1c1c1c;-webkit-text-stroke:0.18px;transform:scaleX(0.9662);">Type_of_Travel</span>
<span class="t" style="left:844.70px;top:492.70px;font-size:12px;color:#1c1c1c;-webkit-text-stroke:0.18px;transform:scaleX(1.0560);">string</span>
<span class="t" style="left:931.68px;top:492.70px;font-size:12px;color:#1c1c1c;-webkit-text-stroke:0.18px;transform:scaleX(1.0326);">categorical</span>
<span class="t" style="left:1054.59px;top:494.90px;font-size:12px;color:#1c1c1c;-webkit-text-stroke:0.18px;transform:scaleX(1.0066);">Drop rows</span>
<span class="t" style="left:407.18px;top:522.70px;font-size:12px;color:#1c1c1c;-webkit-text-stroke:0.18px;transform:scaleX(0.9974);">Class</span>
<span class="t" style="left:844.70px;top:522.70px;font-size:12px;color:#1c1c1c;-webkit-text-stroke:0.18px;transform:scaleX(1.0560);">string</span>
<span class="t" style="left:931.68px;top:522.70px;font-size:12px;color:#1c1c1c;-webkit-text-stroke:0.18px;transform:scaleX(1.0326);">categorical</span>
<span class="t" style="left:1054.59px;top:524.90px;font-size:12px;color:#1c1c1c;-webkit-text-stroke:0.18px;transform:scaleX(1.0066);">Drop rows</span>
<span class="t" style="left:406.80px;top:552.70px;font-size:12px;color:#1c1c1c;-webkit-text-stroke:0.18px;">Flight_Distance</span>
<span class="t" style="left:845.14px;top:552.70px;font-size:12px;color:#1c1c1c;-webkit-text-stroke:0.18px;transform:scaleX(1.0070);">integer</span>
<span class="t" style="left:932.22px;top:552.70px;font-size:12px;color:#1c1c1c;-webkit-text-stroke:0.18px;transform:scaleX(1.0337);">numerical</span>
<span class="t" style="left:1054.59px;top:554.90px;font-size:12px;color:#1c1c1c;-webkit-text-stroke:0.18px;transform:scaleX(1.0066);">Drop rows</span>
<span class="t" style="left:406.66px;top:582.70px;font-size:12px;color:#1c1c1c;-webkit-text-stroke:0.18px;transform:scaleX(1.0129);">Inflight_wifi_service</span>
<span class="t" style="left:845.14px;top:582.70px;font-size:12px;color:#1c1c1c;-webkit-text-stroke:0.18px;transform:scaleX(1.0070);">integer</span>
<span class="t" style="left:932.22px;top:582.70px;font-size:12px;color:#1c1c1c;-webkit-text-stroke:0.18px;transform:scaleX(1.0337);">numerical</span>
<span class="t" style="left:1054.59px;top:584.90px;font-size:12px;color:#1c1c1c;-webkit-text-stroke:0.18px;transform:scaleX(1.0066);">Drop rows</span>
<span class="t" style="left:406.80px;top:612.70px;font-size:12px;color:#1c1c1c;-webkit-text-stroke:0.18px;">Departure/Arrival_time_convenient</span>
<span class="t" style="left:845.14px;top:612.70px;font-size:12px;color:#1c1c1c;-webkit-text-stroke:0.18px;transform:scaleX(1.0070);">integer</span>
<span class="t" style="left:932.22px;top:612.70px;font-size:12px;color:#1c1c1c;-webkit-text-stroke:0.18px;transform:scaleX(1.0337);">numerical</span>
<span class="t" style="left:1054.59px;top:614.90px;font-size:12px;color:#1c1c1c;-webkit-text-stroke:0.18px;transform:scaleX(1.0066);">Drop rows</span>
<span class="t" style="left:406.83px;top:642.70px;font-size:12px;color:#1c1c1c;-webkit-text-stroke:0.18px;transform:scaleX(0.9722);">Ease_of_Online_booking</span>
<span class="t" style="left:845.14px;top:642.70px;font-size:12px;color:#1c1c1c;-webkit-text-stroke:0.18px;transform:scaleX(1.0070);">integer</span>
<span class="t" style="left:932.22px;top:642.70px;font-size:12px;color:#1c1c1c;-webkit-text-stroke:0.18px;transform:scaleX(1.0337);">numerical</span>
<span class="t" style="left:1054.59px;top:644.90px;font-size:12px;color:#1c1c1c;-webkit-text-stroke:0.18px;transform:scaleX(1.0066);">Drop rows</span>
<span class="t" style="left:407.18px;top:672.70px;font-size:12px;color:#1c1c1c;-webkit-text-stroke:0.18px;transform:scaleX(0.9983);">Gate_location</span>
<span class="t" style="left:845.14px;top:672.70px;font-size:12px;color:#1c1c1c;-webkit-text-stroke:0.18px;transform:scaleX(1.0070);">integer</span>
<span class="t" style="left:932.22px;top:672.70px;font-size:12px;color:#1c1c1c;-webkit-text-stroke:0.18px;transform:scaleX(1.0337);">numerical</span>
<span class="t" style="left:1054.59px;top:674.90px;font-size:12px;color:#1c1c1c;-webkit-text-stroke:0.18px;transform:scaleX(1.0066);">Drop rows</span>
<span class="t" style="left:1256.77px;top:672.70px;font-size:12px;color:#1c1c1c;-webkit-text-stroke:0.18px;transform:scaleX(1.0257);">No transformer</span>
<span class="t pop" style="left:1242.28px;top:413.60px;font-size:12px;color:#1c1c1c;-webkit-text-stroke:0.18px;transform:scaleX(0.9987);">Ordinal</span>
<span class="t pop" style="left:1242.29px;top:449.60px;font-size:12px;color:#1c1c1c;-webkit-text-stroke:0.18px;transform:scaleX(0.9762);">One hot</span>
<span class="t pop" style="left:1241.92px;top:485.60px;font-size:12px;color:#1c1c1c;-webkit-text-stroke:0.18px;transform:scaleX(0.9796);">Base n</span>
<span class="t pop" style="left:1242.27px;top:521.60px;font-size:12px;color:#1c1c1c;-webkit-text-stroke:0.18px;transform:scaleX(1.0065);">Sum</span>
<span class="t pop" style="left:1241.87px;top:557.60px;font-size:12px;color:#1c1c1c;-webkit-text-stroke:0.18px;transform:scaleX(1.0251);">Helmert</span>
<span class="t pop" style="left:1241.89px;top:593.60px;font-size:12px;color:#1c1c1c;-webkit-text-stroke:0.18px;transform:scaleX(1.0150);">Backward difference</span>
<span class="t pop" style="left:1241.87px;top:629.60px;font-size:12px;color:#1c1c1c;-webkit-text-stroke:0.18px;transform:scaleX(1.0303);">Polynomial</span>
<span class="t" style="left:291.69px;top:716.30px;font-size:14px;color:#5a5a5a;-webkit-text-stroke:0.602px;transform:scaleX(1.0155);">0 of 24 rows selected</span>
<span class="t" style="left:816.84px;top:716.30px;font-size:14px;color:#d5daf5;-webkit-text-stroke:0.602px;transform:scaleX(1.0324);">Bulk edit</span>

</body>
</html>
